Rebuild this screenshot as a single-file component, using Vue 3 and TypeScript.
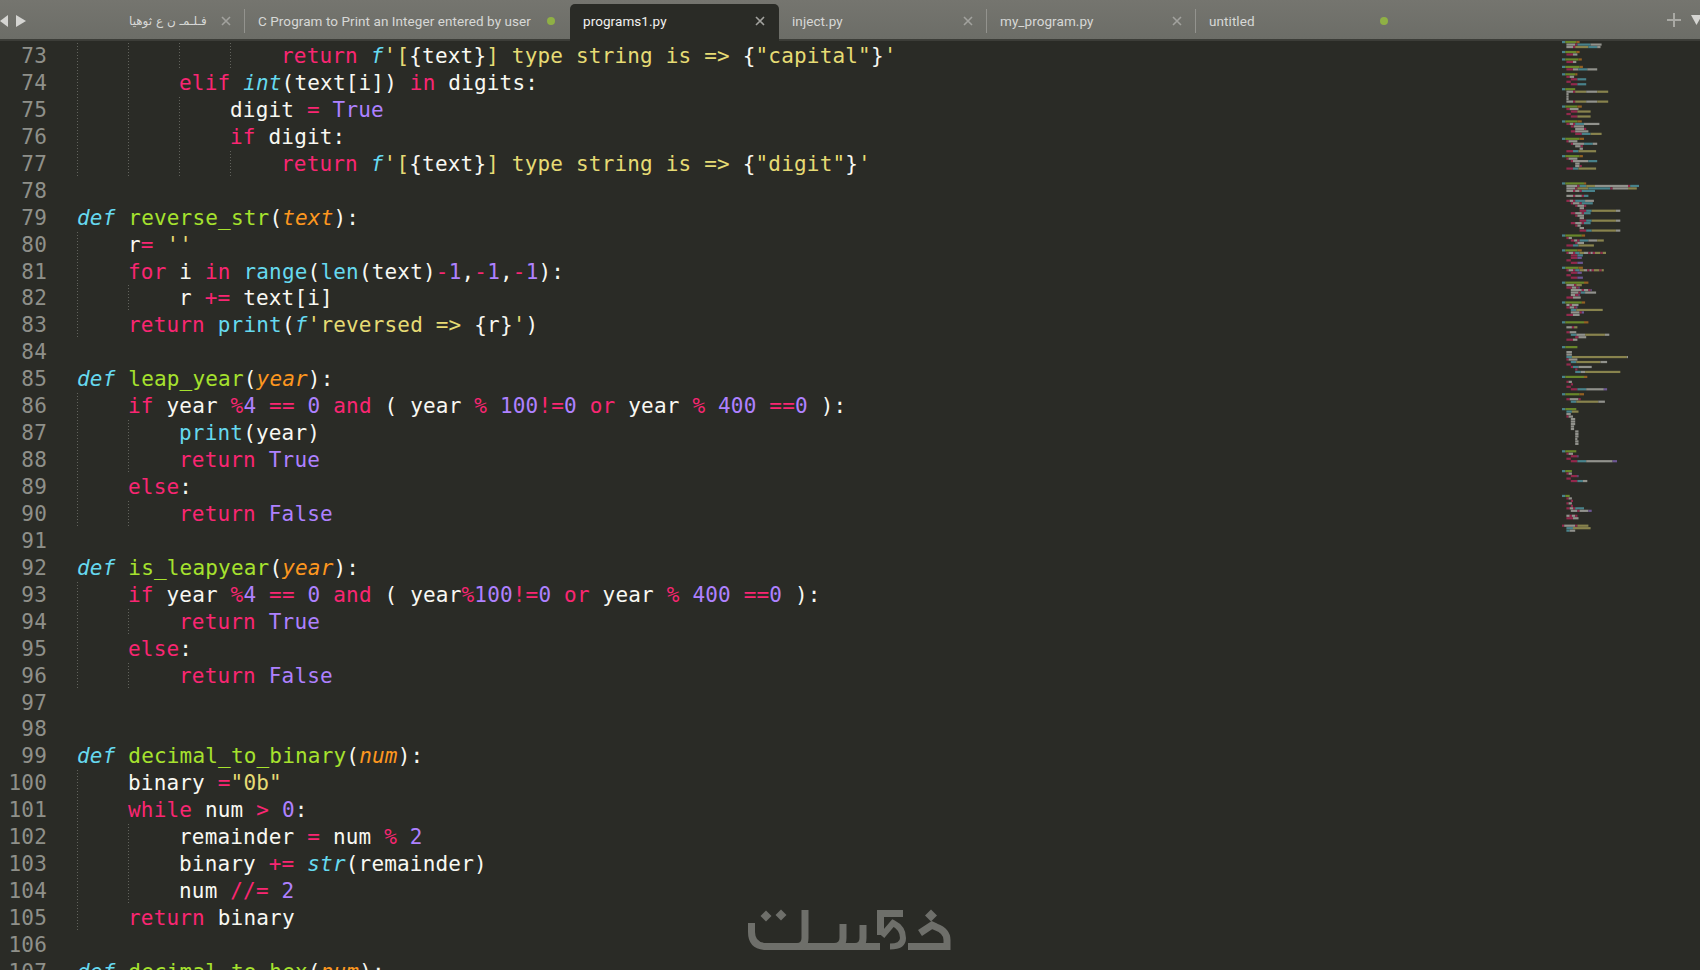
<script setup lang="ts">
type Tab = { label: string; mark: 'close' | 'dot'; active?: boolean; sep?: boolean; width: number; rtl?: boolean }
type Token = { cls: string; text: string }

const tabs: Tab[] = [
  { label: 'فـلـمـ ن ع ثوهيا', mark: 'close', sep: true, width: 129, rtl: true },
  { label: 'C Program to Print an Integer entered by user', mark: 'dot', width: 325 },
  { label: 'programs1.py', mark: 'close', active: true, width: 209 },
  { label: 'inject.py', mark: 'close', sep: true, width: 208 },
  { label: 'my_program.py', mark: 'close', sep: true, width: 209 },
  { label: 'untitled', mark: 'dot', width: 207 },
]

const source: [number, string][] = [
  [4, `«k|return» «c i|f»«y|'[»{text}«y|] type string is => »{«y|"capital"»}«y|'»`],
  [2, `«k|elif» «c i|int»(text[i]) «k|in» digits:`],
  [3, `digit «k|=» «p|True»`],
  [3, `«k|if» digit:`],
  [4, `«k|return» «c i|f»«y|'[»{text}«y|] type string is => »{«y|"digit"»}«y|'»`],
  [0, ``],
  [0, `«c i|def» «g|reverse_str»(«o i|text»):`],
  [1, `r«k|=» «y|''»`],
  [1, `«k|for» i «k|in» «c|range»(«c|len»(text)«k|-»«p|1»,«k|-»«p|1»,«k|-»«p|1»):`],
  [2, `r «k|+=» text[i]`],
  [1, `«k|return» «c|print»(«c i|f»«y|'reversed => »{r}«y|'»)`],
  [0, ``],
  [0, `«c i|def» «g|leap_year»(«o i|year»):`],
  [1, `«k|if» year «k|%»«p|4» «k|==» «p|0» «k|and» ( year «k|%» «p|100»«k|!=»«p|0» «k|or» year «k|%» «p|400» «k|==»«p|0» ):`],
  [2, `«c|print»(year)`],
  [2, `«k|return» «p|True»`],
  [1, `«k|else»:`],
  [2, `«k|return» «p|False»`],
  [0, ``],
  [0, `«c i|def» «g|is_leapyear»(«o i|year»):`],
  [1, `«k|if» year «k|%»«p|4» «k|==» «p|0» «k|and» ( year«k|%»«p|100»«k|!=»«p|0» «k|or» year «k|%» «p|400» «k|==»«p|0» ):`],
  [2, `«k|return» «p|True»`],
  [1, `«k|else»:`],
  [2, `«k|return» «p|False»`],
  [0, ``],
  [0, ``],
  [0, `«c i|def» «g|decimal_to_binary»(«o i|num»):`],
  [1, `binary «k|=»«y|"0b"»`],
  [1, `«k|while» num «k|>» «p|0»:`],
  [2, `remainder «k|=» num «k|%» «p|2»`],
  [2, `binary «k|+=» «c i|str»(remainder)`],
  [2, `num «k|//=» «p|2»`],
  [1, `«k|return» binary`],
  [0, ``],
  [0, `«c i|def» «g|decimal_to_hex»(«o i|num»):`],
]

function tokenize(markup: string): Token[] {
  const out: Token[] = []
  const re = /«([^|]+)\|([^»]*)»/g
  let at = 0
  let m: RegExpExecArray | null
  while ((m = re.exec(markup))) {
    if (m.index > at) out.push({ cls: 'w', text: markup.slice(at, m.index) })
    out.push({ cls: m[1], text: m[2] })
    at = m.index + m[0].length
  }
  if (at < markup.length) out.push({ cls: 'w', text: markup.slice(at) })
  return out
}

const lines = source.map(([indent, markup], i) => ({
  no: 73 + i,
  indent,
  tokens: tokenize(markup),
}))

const miniSource = `0c3g10o3 1w8k2c12w10 1w6k2y12c8w3 _ 0c3g10o3 1k6w4 _ 0c3g12o3 1k6w3 _ 0c3g13o3 1k6w5c8w9 _
0c3g9o2 1k3w4 2k6c8 1k4 2k6c8 _ 0c3g9 1w6k2y10w10y10 1w2 1w2 1w2 1w6k2y10w10y10 _
0c3g11o4 1k3w8 2k6y12 1k4 2k6y12 _ 0c3g11o4 1k3w3k2c8w14 2k3w9 3w8k2 2k4w12 3k6c8y10 _
0c3g13o4 1k2w8 2k2w10c8w4 3w5k2 4w3 1k6c5y16 _ 0c3g13o3 1k2w8 2k2w14c8 3w4 3w4k2 1k6c5y16 _ _ _ _ _
0c3g17o2 1w10k2c6y8w30k2c8 1w8k2y10c20k2w14y8 1w6k2w4k2c12 _ 1w6k2w6k2c4 _
1k3w3k2c9w8 2k2w6k2c10 3k2w6k2 4w4 4k6c5y22w4 2k4w6k2c6 3k2w6 4w4 4k6c5y22w4 2k4w6k2c6 3k2w3 4w4 4k6c5y22w4 _
0c3g15o3 1k2w3 2k3w3k2c8w8y6 3k2w6 1k6c5y14 _
0c3g11o4 1k2w4k2c4y4w4k2w2k2y5k2y3 2k6c5 2k6p4 1k4 2k6p5 _
0c3g12o4 1k2w4k2c4y4w3k2w2k2y5k2y2 2k6p4 1k4 2k6p5 _
0c3g17o4 1w7k2y5 1k5w4k2p1 2w10k2w4k2p1 2w7k2c4w10 2w4k3p1 1k6w7 _
0c3g15o3 1w3k2w6 1k3w4k2p1 2c5y24 2w8k2p2 1k6w6 _ _
0c3g17o4 _ 1w5k2y3 _ 1k3w6 2c5w8y18w4 3k3w7 1k6w4 _ _
0c3g11 _ 1w5 1w5 1c5y50w1 1k2w8 2c5y22w6 1k4 2k2c5w12 3k2 3c5w4y32 _
0c3g17o3 _ 1k2w3 2k2 1k4 2k6c8w16p3 _
0c3g13o4 _ 1k3w8k2 2c5y20w6 _ _
0c3g10 1c5y6 1w4 1k2w4 2w4 2w4 2w4 2w3 2w3 3w3 3w3 3w3 3w2 3w3 3w3 _ _
0c3g10 1k2w4 2k6p1 1k4 2k6c8w24p4 _ _ _
0c3g6 1k2w3 2k6p1 1k4 2k6c5w4 _ _ _ _ _
0c3g4 1k2w3 2k2 1k2w3 2k2 1k3w3k2c8 2w6k2w8p3 _ 1w3k2w3k2 1k6w5 _ _
0k2w10k2y10 1c6y16 1c3w5`

const miniColors: Record<string, string> = {
  c: '#66d9ef', g: '#a6e22e', o: '#fd971f', k: '#f92672', w: '#f8f8f2', y: '#e6db74', p: '#ae81ff',
}

const CELL = 1.1
const ROW = 2.48
const miniRects = miniSource.trim().split(/\s+/).flatMap((row, r) => {
  if (row === '_') return []
  let x = Number(row[0]) * 4 * CELL
  const rects: { x: number; y: number; w: number; fill: string }[] = []
  for (const seg of row.slice(1).matchAll(/([a-z])(\d+)/g)) {
    const w = Number(seg[2]) * CELL
    rects.push({ x, y: r * ROW, w, fill: miniColors[seg[1]] })
    x += w
  }
  return rects
})
</script>

<template>
  <div class="editor">
    <header class="bar">
      <div class="nav">
        <svg width="26" height="12" viewBox="0 0 26 12">
          <polygon points="0,6 8,0 8,12" />
          <polygon points="16,0 26,6 16,12" />
        </svg>
      </div>
      <div
        v-for="tab in tabs"
        :key="tab.label"
        class="tab"
        :class="{ active: tab.active, sep: tab.sep }"
        :style="{ width: tab.width + 'px' }"
      >
        <span class="label" :class="{ rtl: tab.rtl }">{{ tab.label }}</span>
        <svg v-if="tab.mark === 'close'" class="mark" width="12" height="12" viewBox="0 0 12 12">
          <path d="M2 2 L10 10 M10 2 L2 10" />
        </svg>
        <span v-else class="dot"></span>
      </div>
      <div class="tools">
        <svg width="14" height="14" viewBox="0 0 14 14" class="plus">
          <path d="M7 0 V14 M0 7 H14" />
        </svg>
        <svg width="11" height="10" viewBox="0 0 11 10" class="down">
          <polygon points="0,0 11,0 5.5,10" />
        </svg>
      </div>
    </header>

    <main class="body">
      <div class="code">
        <div v-for="line in lines" :key="line.no" class="line">
          <span class="no">{{ line.no }}</span>
          <span class="text">
            <i v-for="n in line.indent" :key="n" class="guide"></i>
            <span v-for="(tok, t) in line.tokens" :key="t" :class="tok.cls">{{ tok.text }}</span>
          </span>
        </div>
      </div>
      <aside class="mini">
        <svg width="100" height="500" viewBox="0 0 100 500">
          <rect
            v-for="(r, i) in miniRects"
            :key="i"
            :x="r.x"
            :y="r.y"
            :width="r.w"
            height="2.2"
            :fill="r.fill"
          />
        </svg>
      </aside>
    </main>

    <svg class="logo" width="206" height="46" viewBox="746 908 206 46" aria-label="logo">
      <g fill="#6e6f6a">
        <polygon points="766,910.5 771.5,916 766,921.5 760.5,916" />
        <polygon points="781,909.5 786.5,915 781,920.5 775.5,915" />
        <polygon points="931,909.5 937,915.5 931,921.5 925,915.5" />
        <polygon points="877,910 903,910 903,917 884,917 884,935 877,935" />
      </g>
      <g fill="none" stroke="#6e6f6a" stroke-width="7">
        <path d="M751.5 923 V932 Q751.5 946.5 767 946.5 H880" />
        <path d="M805 910 V938 Q805 946.5 797 946.5" />
        <path d="M843 924 L843 938 Q843 946.5 834 946.5" />
        <path d="M863 925 V938 Q863 946.5 855 946.5" />
        <path d="M882 936 L893 923 Q903 928 903 938 Q903 946.5 890 946.5" stroke-width="6" />
        <path d="M908 946.5 H947 V940 Q947 931 936 927 L932 925 L920 933" />
      </g>
    </svg>
  </div>
</template>

<style scoped>
.editor {
  position: relative;
  width: 1700px;
  height: 970px;
  overflow: hidden;
  background: #2a2b26;
}

.bar {
  display: flex;
  align-items: flex-end;
  height: 39px;
  background: linear-gradient(#75756f, #6c6d67);
  border-bottom: 2px solid #3c3d38;
  font-family: Roboto, "DejaVu Sans", sans-serif;
  font-size: 13.5px;
  letter-spacing: 0.07px;
  color: #d7d8d6;
}

.nav {
  display: flex;
  align-items: center;
  width: 116px;
  height: 36px;
}

.nav polygon {
  fill: #d5d5d2;
}

.tab {
  display: flex;
  align-items: center;
  justify-content: space-between;
  height: 35px;
  box-sizing: border-box;
  padding: 0 13px 2px 13px;
  position: relative;
}

.tab.sep::after {
  content: "";
  position: absolute;
  right: 0;
  top: 5px;
  height: 24px;
  width: 1px;
  background: #93938e;
}

.tab.active {
  background: #2a2b26;
  border-radius: 5px 5px 0 0;
  color: #f2f2f0;
  margin-bottom: -2px;
  height: 37px;
  padding-bottom: 4px;
}

.rtl {
  direction: rtl;
  font-family: "DejaVu Sans", sans-serif;
  font-size: 12px;
}

.mark {
  stroke: #a2a29e;
  stroke-width: 1.6;
  fill: none;
  flex: none;
}

.dot {
  width: 8px;
  height: 8px;
  margin-right: 2px;
  border-radius: 50%;
  background: #8fb045;
  flex: none;
}

.tools {
  flex: 1;
  display: flex;
  align-items: center;
  justify-content: flex-end;
  gap: 10px;
  height: 36px;
  margin-right: -2px;
}

.plus {
  stroke: #a9a9a4;
  stroke-width: 2;
  margin-bottom: 3px;
}

.down {
  fill: #d5d5d2;
  margin-bottom: 3px;
}

.body {
  display: flex;
  justify-content: space-between;
}

.code {
  padding-top: 2px;
  font-family: "DejaVu Sans Mono", monospace;
  font-size: 21px;
  letter-spacing: 0.18px;
  color: #f8f8f2;
}

.line {
  display: flex;
  height: 26.95px;
  line-height: 26.95px;
  white-space: pre;
}

.no {
  width: 47px;
  text-align: right;
  color: #8f908a;
  flex: none;
}

.text {
  margin-left: 30px;
}

.guide {
  display: inline-block;
  width: 51px;
  height: 27px;
  vertical-align: top;
  background: repeating-linear-gradient(#62635d 0 1px, transparent 1px 3px) no-repeat left top / 1px 100%;
}

.k { color: #f92672; }
.c { color: #66d9ef; }
.g { color: #a6e22e; }
.o { color: #fd971f; }
.y { color: #e6db74; }
.p { color: #ae81ff; }
.w { color: #f8f8f2; }
.i { font-style: italic; }

.mini {
  width: 138px;
  opacity: 0.5;
  filter: blur(0.4px);
}

.mini svg {
  display: block;
}

.logo {
  position: absolute;
  left: 746px;
  top: 908px;
}
</style>
